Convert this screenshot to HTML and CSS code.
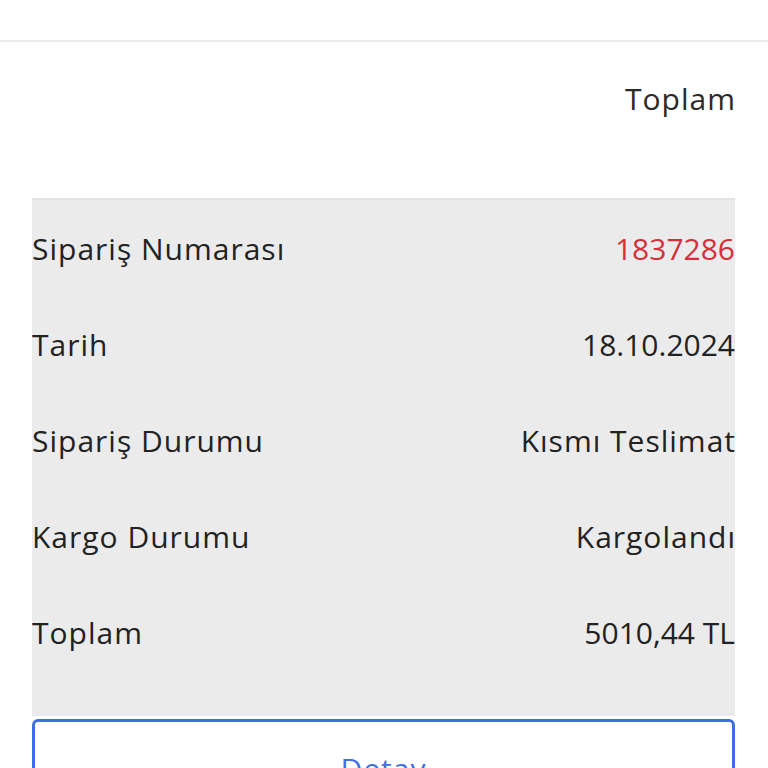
FILE: index.html
```html
<!DOCTYPE html>
<html lang="tr">
<head>
<meta charset="utf-8">
<link rel="stylesheet" href="styles.css">
</head>
<body>
<header class="topbar"></header>
<main class="content">
  <div class="head-row"><span class="head-label">Toplam</span></div>
  <section class="order-card">
    <div class="row"><span class="label">Sipariş Numarası</span><span class="value num red">1837286</span></div>
    <div class="row"><span class="label">Tarih</span><span class="value num">18.10.2024</span></div>
    <div class="row"><span class="label">Sipariş Durumu</span><span class="value">Kısmı Teslimat</span></div>
    <div class="row"><span class="label">Kargo Durumu</span><span class="value">Kargolandı</span></div>
    <div class="row"><span class="label">Toplam</span><span class="value num">5010,44 TL</span></div>
  </section>
  <button class="detail-btn">Detay</button>
</main>
</body>
</html>
```
FILE: styles.css
```css
* { box-sizing: border-box; }
html, body { margin: 0; padding: 0; background: #fff; }
body {
  font-family: "Open Sans", "Noto Sans", sans-serif;
  color: #222;
  width: 768px;
  height: 768px;
  overflow: hidden;
}
.topbar {
  height: 42px;
  border-bottom: 2px solid #ececec;
}
.content {
  padding: 0 33px 0 32px;
}
.head-row {
  height: 156px;
  display: flex;
  justify-content: flex-end;
  align-items: flex-start;
  padding-top: 36px;
}
.head-label {
  font-size: 30px;
  line-height: 42px;
  letter-spacing: 1px;
  margin-right: -1px;
  color: #2a2a2a;
}
.order-card {
  background: #ebebeb;
  border-top: 2px solid #e2e2e2;
  padding-bottom: 36px;
  display: flex;
  flex-direction: column;
}
.row {
  height: 96px;
  display: flex;
  justify-content: space-between;
  align-items: center;
  font-size: 30px;
  letter-spacing: 1px;
}
.value { margin-right: -1px; }
.value.num { letter-spacing: 0; margin-right: 0; }
.value.red { color: #d3303c; }
.detail-btn {
  display: block;
  width: 100%;
  margin-top: 3px;
  height: 90px;
  padding: 8px 0 0;
  background: #fff;
  border: 3px solid #3f6fe0;
  border-radius: 6px;
  font-family: inherit;
  font-size: 30px;
  letter-spacing: 1px;
  color: #3f6fe0;
}
```
